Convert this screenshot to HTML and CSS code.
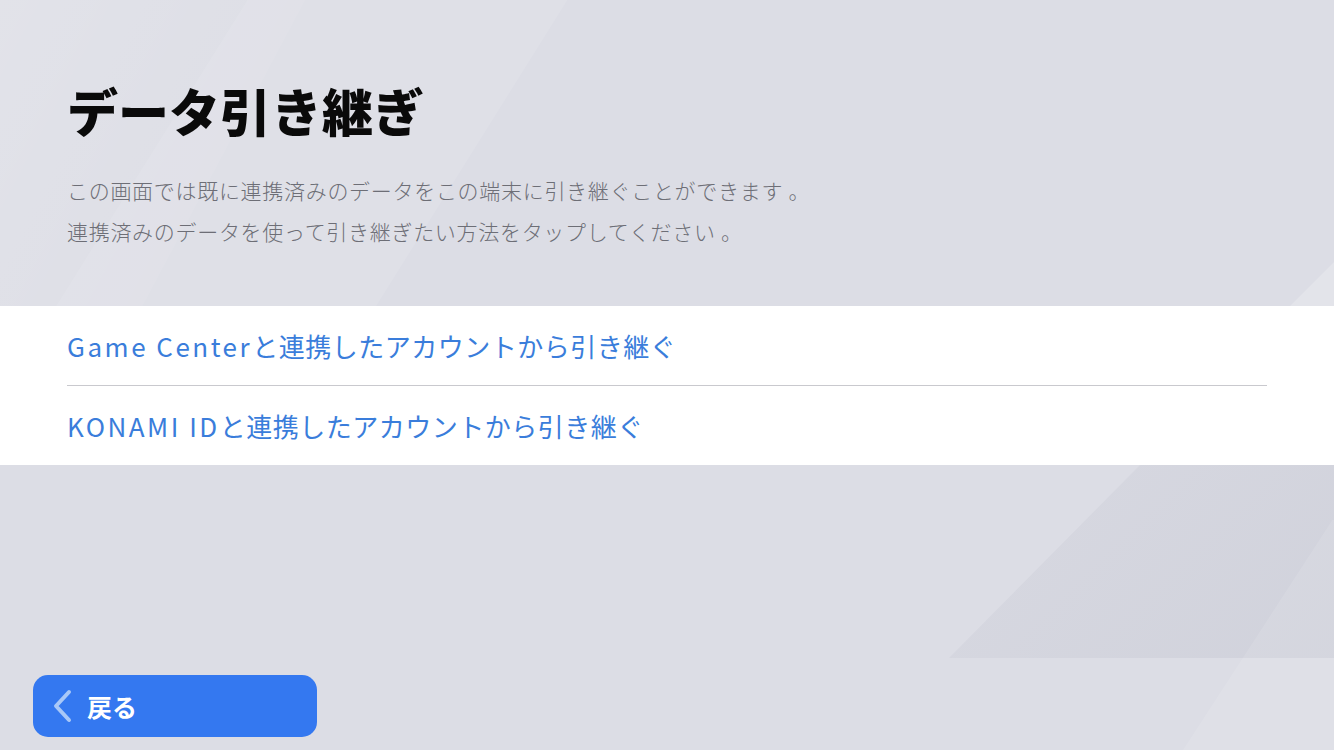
FILE: index.html
```html
<!DOCTYPE html>
<html lang="ja">
<head>
<meta charset="utf-8">
<link rel="stylesheet" href="styles.css">
</head>
<body>
<div class="screen">
  <div class="deco deco-a"></div>
  <div class="deco deco-b"></div>
  <div class="deco deco-c"></div>
  <div class="deco deco-e"></div>
  <div class="deco deco-d"></div>
  <header class="head">
    <h1 class="title">データ引き継ぎ</h1>
    <p class="desc">この画面では既に連携済みのデータをこの端末に引き継ぐことができます 。<br>連携済みのデータを使って引き継ぎたい方法をタップしてください 。</p>
  </header>
  <ul class="options">
    <li class="option"><span class="opt-text"><span class="lat">Game Center</span>と連携したアカウントから引き継ぐ</span></li>
    <li class="option"><span class="opt-text"><span class="lat">KONAMI ID</span>と連携したアカウントから引き継ぐ</span></li>
  </ul>
  <div class="spacer"></div>
  <footer class="foot">
    <button class="back">
      <svg class="chev" width="22" height="34" viewBox="0 0 22 34"><path d="M18 3 L5 17 L18 31" fill="none" stroke="#a9c8f7" stroke-width="4" stroke-linecap="round" stroke-linejoin="round"/></svg>
      <span class="back-label">戻る</span>
    </button>
  </footer>
</div>
</body>
</html>
```
FILE: styles.css
```css
* { box-sizing: border-box; }
html, body { margin: 0; padding: 0; }
body {
  width: 1334px;
  height: 750px;
  overflow: hidden;
  font-family: "Noto Sans CJK JP", "Noto Sans", sans-serif;
}
.screen {
  position: relative;
  width: 1334px;
  height: 750px;
  background: #dcdde5;
  display: flex;
  flex-direction: column;
  overflow: hidden;
}
.deco { position: absolute; pointer-events: none; }
.deco-a {
  left: -200px; top: -50px; width: 420px; height: 420px;
  background: linear-gradient(90deg, rgba(255,255,255,0.22), rgba(255,255,255,0.05));
  transform: skewX(-28deg);
}
.deco-b {
  left: 160px; top: -50px; width: 320px; height: 380px;
  background: rgba(255,255,255,0.09);
  transform: skewX(-32deg);
}
.deco-c {
  left: 949px; top: 465px; width: 420px; height: 193px;
  background: linear-gradient(90deg, rgba(190,192,204,0.22), rgba(190,192,204,0.4));
  transform: skewX(-44.7deg);
  transform-origin: bottom left;
}
.deco-e {
  left: 1183px; top: 520px; width: 200px; height: 230px;
  background: rgba(255,255,255,0.1);
  transform: skewX(-33deg);
  transform-origin: bottom left;
}
.deco-d {
  left: 1290px; top: 262px; width: 120px; height: 44px;
  background: rgba(255,255,255,0.22);
  transform: skewX(-45deg);
  transform-origin: bottom left;
}
.head {
  position: relative;
  padding: 76px 0 0 67px;
  height: 306px;
}
.title {
  margin: 0;
  font-size: 51px;
  line-height: 68px;
  font-weight: 900;
  color: #0a0a0a;
}
.desc {
  margin: 26px 0 0;
  font-size: 21px;
  line-height: 41px;
  font-weight: 300;
  color: #6d6e76;
  letter-spacing: 0.7px;
}
.options {
  position: relative;
  list-style: none;
  margin: 0;
  padding: 0 67px;
  background: #ffffff;
  height: 159px;
  display: flex;
  flex-direction: column;
}
.option {
  flex: 1;
  display: flex;
  align-items: center;
  color: #3a7ddb;
  font-size: 26px;
  font-weight: 400;
  letter-spacing: 0.5px;
}
.option + .option { border-top: 1.5px solid #c9c9ce; }
.lat { letter-spacing: 2.5px; }
.spacer { flex: 1; }
.foot {
  position: relative;
  padding: 0 0 13px 33px;
}
.back {
  width: 284px;
  height: 62px;
  border: none;
  border-radius: 15px;
  background: #3478f0;
  display: flex;
  align-items: center;
  padding: 0 0 0 18px;
  gap: 14px;
  font-family: inherit;
}
.back-label {
  color: #ffffff;
  font-size: 25px;
  font-weight: 700;
}
```
